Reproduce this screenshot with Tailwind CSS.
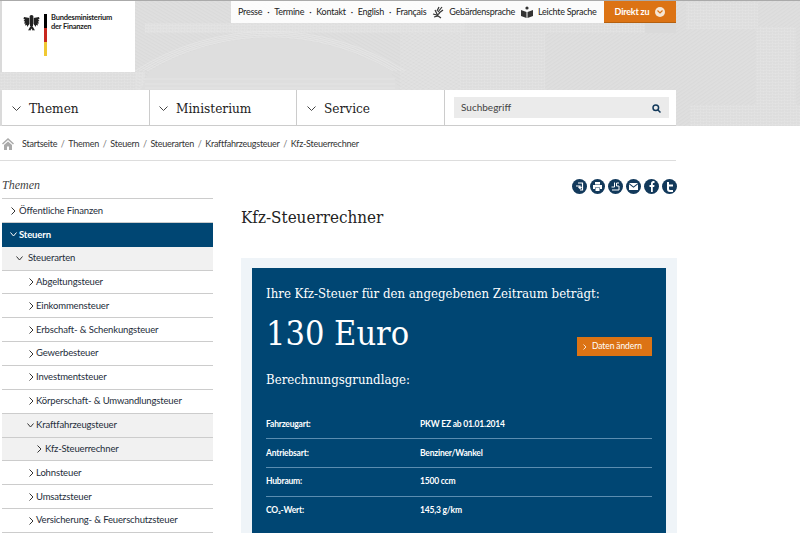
<!DOCTYPE html>
<html lang="de">
<head>
  <meta charset="UTF-8">
  <title>Kfz-Steuerrechner</title>
  <script src="https://cdn.jsdelivr.net/npm/@tailwindcss/browser@4"></script>
</head>
<body class="bg-white font-['Lato',sans-serif] text-[#333]">
  <div class="w-[800px] h-[533px] overflow-hidden">

    <!-- Header -->
    <header class="relative h-[126px] bg-[#dadada] border-t border-[#aaa]">
      <svg class="absolute inset-0" width="800" height="125" fill="none">
        <defs>
          <pattern id="brick" width="6" height="3" patternUnits="userSpaceOnUse">
            <path d="M0 .5H6M0 2H6M1.500 0V1.500M4.500 1.500V3" stroke="#e6e6e6" stroke-width=".6"/>
          </pattern>
          <pattern id="fine" width="3" height="3" patternUnits="userSpaceOnUse" patternTransform="rotate(30)">
            <path d="M0 1H3" stroke="#e6e6e6" stroke-width=".7"/>
          </pattern>
          <pattern id="fine2" width="3" height="3" patternUnits="userSpaceOnUse" patternTransform="rotate(-35)">
            <path d="M0 1H3" stroke="#e6e6e6" stroke-width=".7"/>
          </pattern>
        </defs>
        <rect x="135" y="0" width="330" height="90" fill="url(#fine)"/>
        <rect x="0" y="71" width="145" height="19" fill="url(#brick)"/>
        <rect x="145" y="22" width="500" height="10" fill="url(#brick)"/>
        <path d="M400 32H676V90H400Z" fill="url(#fine2)"/>
        <rect x="460" y="32" width="85" height="57" fill="#dadada"/>
        <rect x="460" y="32" width="85" height="57" fill="url(#brick)"/>
        <path d="M150 70A235 235 0 0 1 390 70L400 90H140Z" fill="#dedede"/>
        <g stroke="#e8e8e8" stroke-width=".7">
          <path d="M147 70A238 238 0 0 1 393 70M143 70A242 242 0 0 1 397 70M139 70A246 246 0 0 1 401 70M135 70A250 250 0 0 1 405 70"/>
          <path d="M145 78H395M145 83H395M145 87H395"/>
        </g>
        <rect x="676" y="0" width="124" height="125" fill="url(#fine2)"/>
        <rect x="686" y="1" width="72" height="27" fill="#dadada"/>
        <rect x="686" y="1" width="72" height="27" fill="url(#brick)"/>
        <rect x="756" y="26" width="40" height="78" fill="#dadada"/>
        <rect x="756" y="26" width="40" height="78" fill="url(#brick)"/>
        <rect x="690" y="104" width="110" height="21" fill="#dadada"/>
        <rect x="690" y="104" width="110" height="21" fill="url(#brick)"/>
      </svg>

      <div class="relative flex items-start h-[89px]">
        <!-- Logo -->
        <div class="ml-[2px] w-[133px] h-[71px] bg-white flex items-start pt-[12px] pl-[21px] gap-[4px]">
          <svg width="17" height="18" viewBox="0 0 17 18" class="mt-px shrink-0" fill="#222">
            <circle cx="8.500" cy="3" r="2"/>
            <path d="M7 4h3v8l-1.500 2L7 12Z"/>
            <path d="M6.500 4 1 3 .5 5 2 5.500 .5 7 2 7.500 1 9.500 2.500 9.500 2 11.500 4 11 4 13 6.500 10ZM10.500 4 16 3 16.500 5 15 5.500 16.500 7 15 7.500 16 9.500 14.500 9.500 15 11.500 13 11 13 13 10.500 10Z"/>
            <path d="M7 13 5 16.500 6.500 16 7 17 8.500 14.500 10 17 10.500 16 12 16.500 10 13Z"/>
          </svg>
          <div class="w-[3px] h-[42px] mt-[1px] flex flex-col shrink-0">
            <div class="h-[14px] bg-black"></div>
            <div class="h-[14px] bg-[#c8281e]"></div>
            <div class="h-[14px] bg-[#f0c832]"></div>
          </div>
          <div class="text-[7.500px] tracking-[-0.2px] leading-[8.500px] font-bold text-[#222] pt-[1px] whitespace-nowrap">Bundesministerium<br>der Finanzen</div>
        </div>

        <!-- Meta nav -->
        <div class="ml-[96px] w-[373px] h-[22px] bg-white/90 flex items-center pl-[7px] text-[9px] tracking-[-0.25px] text-[#222] whitespace-nowrap">
          <span>Presse</span><span class="mx-[5px]">·</span>
          <span>Termine</span><span class="mx-[5px]">·</span>
          <span>Kontakt</span><span class="mx-[5px]">·</span>
          <span>English</span><span class="mx-[5px]">·</span>
          <span>Français</span>
          <svg class="ml-[6px] mr-[5px] shrink-0" width="12" height="13" viewBox="0 0 12 13" fill="none" stroke="#333" stroke-width="1.200">
            <path d="M7 1 5 5M10 1 6 6M11 4 7 7M3 4l2 4M1 8l4 1 3-2M2 11l4-1 3 2"/>
          </svg>
          <span>Gebärdensprache</span>
          <svg class="ml-[6px] mr-[5px] shrink-0" width="12" height="12" viewBox="0 0 12 12" fill="#333">
            <circle cx="6" cy="2" r="1.600"/>
            <path d="M0 4 5.500 6V12L0 10ZM12 4 6.500 6V12L12 10Z"/>
          </svg>
          <span>Leichte Sprache</span>
        </div>
        <div class="w-[72px] h-[22px] bg-[#dc7314] border-b border-[#b5600f] text-white text-[9px] tracking-[-0.2px] font-bold flex items-center justify-center gap-[6px]">
          <span>Direkt zu</span>
          <span class="w-[10px] h-[10px] rounded-full bg-[#f6e6d4] flex items-center justify-center">
            <svg width="6" height="4" viewBox="0 0 6 4" fill="none" stroke="#dc7314" stroke-width="1.200"><path d="M.5.5 3 3 5.500.5"/></svg>
          </span>
        </div>
      </div>

      <!-- Main nav -->
      <nav class="relative ml-[2px] w-[674px] h-[36px] bg-white border-b border-[#ccc] flex font-['DejaVu_Serif',serif] font-stretch-condensed text-[13.500px] text-[#222]">
        <a class="w-[148px] flex items-center border-r border-[#ccc] pl-[10px] pt-[1px] gap-[8px]">
          <svg width="9" height="5" viewBox="0 0 9 5" fill="none" stroke="#444"><path d="M.5.5 4.500 4.500 8.500.5"/></svg>Themen</a>
        <a class="w-[147px] flex items-center border-r border-[#ccc] pl-[9px] pt-[1px] gap-[8px]">
          <svg width="9" height="5" viewBox="0 0 9 5" fill="none" stroke="#444"><path d="M.5.5 4.500 4.500 8.500.5"/></svg>Ministerium</a>
        <a class="w-[148px] flex items-center border-r border-[#ccc] pl-[10px] pt-[1px] gap-[8px]">
          <svg width="9" height="5" viewBox="0 0 9 5" fill="none" stroke="#444"><path d="M.5.5 4.500 4.500 8.500.5"/></svg>Service</a>
        <div class="flex-1 pl-[9px] pt-[7px]">
          <div class="w-[215px] h-[21px] bg-[#ebebeb] flex items-center justify-between pl-[7px] pr-[8px] pb-[1px] font-['Lato',sans-serif] text-[10px] text-[#444]">
            <span>Suchbegriff</span>
            <svg class="mt-[3px]" width="9" height="9" viewBox="0 0 9 9" fill="none" stroke="#12395b" stroke-width="1.500"><circle cx="3.800" cy="3.800" r="2.800"/><path d="M6 6 8.500 8.500"/></svg>
          </div>
        </div>
      </nav>
    </header>

    <!-- Breadcrumb -->
    <div class="w-[676px] h-[35px] border-b border-[#ddd] flex items-center pl-[2px] pt-[1px] text-[9px] tracking-[-0.25px] text-[#333] whitespace-nowrap">
      <svg class="mr-[8px]" width="12" height="12" viewBox="0 0 12 12" fill="#aaa"><path d="M6 0 0 5.500 1 6.500 6 2 11 6.500 12 5.500ZM2 7 6 3.500 10 7V12H7V8.500H5V12H2Z"/></svg>
      <span>Startseite</span><span class="mx-[3.700px] text-[#777]">/</span>
      <span>Themen</span><span class="mx-[3.700px] text-[#777]">/</span>
      <span>Steuern</span><span class="mx-[3.700px] text-[#777]">/</span>
      <span>Steuerarten</span><span class="mx-[3.700px] text-[#777]">/</span>
      <span>Kraftfahrzeugsteuer</span><span class="mx-[3.700px] text-[#777]">/</span>
      <span>Kfz-Steuerrechner</span>
    </div>

    <div class="flex">
      <!-- Sidebar -->
      <aside class="ml-[2px] w-[211px] shrink-0 text-[9.500px] tracking-[-0.15px] text-[#1e2d3a]">
        <div class="h-[38px] border-b border-[#ccc] flex items-center pt-[11px] font-['Liberation_Serif',serif] italic text-[12px] tracking-normal text-[#444]">Themen</div>
        <a class="h-[23.860px] border-b border-[#ccc] flex items-center pl-[9px] pt-[1px] gap-[3px]">
          <svg width="5" height="8" viewBox="0 0 5 8" fill="none" stroke="#333"><path d="M.5.5 4 4 .5 7.500"/></svg>Öffentliche Finanzen</a>
        <a class="h-[23.860px] bg-[#004673] text-white font-bold flex items-center pl-[8px] gap-[2px]">
          <svg width="7" height="5" viewBox="0 0 7 5" fill="none" stroke="#fff"><path d="M.5.5 3.500 4 6.500.5"/></svg>Steuern</a>
        <a class="h-[23.860px] bg-[#f1f1f1] border-b border-[#ccc] flex items-center pl-[14px] gap-[5px]">
          <svg width="7" height="5" viewBox="0 0 7 5" fill="none" stroke="#333"><path d="M.5.5 3.500 4 6.500.5"/></svg>Steuerarten</a>
        <a class="h-[23.860px] border-b border-[#ccc] flex items-center pl-[27px] gap-[2px]">
          <svg width="5" height="8" viewBox="0 0 5 8" fill="none" stroke="#333"><path d="M.5.5 4 4 .5 7.500"/></svg>Abgeltungsteuer</a>
        <a class="h-[23.860px] border-b border-[#ccc] flex items-center pl-[27px] gap-[2px]">
          <svg width="5" height="8" viewBox="0 0 5 8" fill="none" stroke="#333"><path d="M.5.5 4 4 .5 7.500"/></svg>Einkommensteuer</a>
        <a class="h-[23.860px] border-b border-[#ccc] flex items-center pl-[27px] gap-[2px]">
          <svg width="5" height="8" viewBox="0 0 5 8" fill="none" stroke="#333"><path d="M.5.5 4 4 .5 7.500"/></svg>Erbschaft- &amp; Schenkungsteuer</a>
        <a class="h-[23.860px] border-b border-[#ccc] flex items-center pl-[27px] gap-[2px]">
          <svg width="5" height="8" viewBox="0 0 5 8" fill="none" stroke="#333"><path d="M.5.5 4 4 .5 7.500"/></svg>Gewerbesteuer</a>
        <a class="h-[23.860px] border-b border-[#ccc] flex items-center pl-[27px] gap-[2px]">
          <svg width="5" height="8" viewBox="0 0 5 8" fill="none" stroke="#333"><path d="M.5.5 4 4 .5 7.500"/></svg>Investmentsteuer</a>
        <a class="h-[23.860px] border-b border-[#ccc] flex items-center pl-[27px] gap-[2px]">
          <svg width="5" height="8" viewBox="0 0 5 8" fill="none" stroke="#333"><path d="M.5.5 4 4 .5 7.500"/></svg>Körperschaft- &amp; Umwandlungsteuer</a>
        <a class="h-[23.860px] bg-[#f1f1f1] border-b border-[#ccc] flex items-center pl-[25px] gap-[2px]">
          <svg width="7" height="5" viewBox="0 0 7 5" fill="none" stroke="#333"><path d="M.5.5 3.500 4 6.500.5"/></svg>Kraftfahrzeugsteuer</a>
        <a class="h-[23.860px] bg-[#f1f1f1] border-b border-[#ccc] flex items-center pl-[35px] gap-[3px]">
          <svg width="5" height="8" viewBox="0 0 5 8" fill="none" stroke="#333"><path d="M.5.5 4 4 .5 7.500"/></svg>Kfz-Steuerrechner</a>
        <a class="h-[23.860px] border-b border-[#ccc] flex items-center pl-[27px] gap-[2px]">
          <svg width="5" height="8" viewBox="0 0 5 8" fill="none" stroke="#333"><path d="M.5.5 4 4 .5 7.500"/></svg>Lohnsteuer</a>
        <a class="h-[23.860px] border-b border-[#ccc] flex items-center pl-[27px] gap-[2px]">
          <svg width="5" height="8" viewBox="0 0 5 8" fill="none" stroke="#333"><path d="M.5.5 4 4 .5 7.500"/></svg>Umsatzsteuer</a>
        <a class="h-[23.860px] border-b border-[#ccc] flex items-center pl-[27px] gap-[2px]">
          <svg width="5" height="8" viewBox="0 0 5 8" fill="none" stroke="#333"><path d="M.5.5 4 4 .5 7.500"/></svg>Versicherung- &amp; Feuerschutzsteuer</a>
      </aside>

      <!-- Content -->
      <main class="ml-[28px] w-[436px] shrink-0">
        <div class="flex justify-end gap-[3px] pt-[18px] h-[36px]">
          <span class="w-[15px] h-[15px] rounded-full bg-[#12395b] flex items-center justify-center">
            <svg width="9" height="9" viewBox="0 0 9 9" fill="none" stroke="#fff" stroke-width="1.200"><path d="M3 1H7.500V8H5M1 4H5V6.500M3.500 5 5 6.500 6.500 5"/></svg>
          </span>
          <span class="w-[15px] h-[15px] rounded-full bg-[#12395b] flex items-center justify-center">
            <svg width="9" height="9" viewBox="0 0 9 9" fill="#fff"><path d="M2 0H7V2.500H2ZM0 3H9V7H7V5.500H2V7H0ZM2.500 6H6.500V9H2.500Z"/></svg>
          </span>
          <span class="w-[15px] h-[15px] rounded-full bg-[#12395b] flex items-center justify-center">
            <svg width="9" height="9" viewBox="0 0 9 9" fill="none" stroke="#fff"><path d="M3.500.5V5H.5M5.500 1H8M5.500 1V4H8V8H1"/></svg>
          </span>
          <span class="w-[15px] h-[15px] rounded-full bg-[#12395b] flex items-center justify-center">
            <svg width="9" height="7" viewBox="0 0 9 7" fill="#fff"><path d="M0 0H9L4.500 3.500ZM0 1.200 4.500 4.700 9 1.200V7H0Z"/></svg>
          </span>
          <span class="w-[15px] h-[15px] rounded-full bg-[#12395b] flex items-center justify-center">
            <svg width="6" height="11" viewBox="0 0 6 11" fill="#fff"><path d="M2 11V6H.5V4H2V2.500C2 1 3 0 4.300 0H5.500V2H4.500C4 2 3.800 2.200 3.800 2.700V4H5.500L5.200 6H3.800V11Z"/></svg>
          </span>
          <span class="w-[15px] h-[15px] rounded-full bg-[#12395b] flex items-center justify-center">
            <svg width="8" height="10" viewBox="0 0 8 10" fill="#fff"><path d="M1 0H3V2.500H7V4.500H3V6.500C3 7.500 3.500 8 4.500 8H7V10H4C2 10 1 8.800 1 7Z"/></svg>
          </span>
        </div>
        <h1 class="h-[26px] mt-[7px] font-['DejaVu_Serif',serif] font-stretch-condensed text-[16.900px] leading-[26px] text-[#222]">Kfz-Steuerrechner</h1>
        <div class="mt-[28px] h-[400px] bg-[#eff4f8] pt-[10px] px-[11px]">
          <div class="h-[390px] bg-[#004673] px-[14px] text-white w-[414px]">
            <div class="pt-[17px] font-['DejaVu_Serif',serif] font-stretch-condensed text-[13.100px] leading-[18px] whitespace-nowrap">Ihre Kfz-Steuer für den angegebenen Zeitraum beträgt:</div>
            <div class="flex items-end justify-between mt-[8px] h-[44px]">
              <div class="font-['DejaVu_Serif',serif] font-stretch-condensed text-[34px] leading-[44px]">130 Euro</div>
              <a class="w-[75px] h-[19px] -mb-[1px] bg-[#dc7314] text-[8.500px] tracking-[-0.1px] flex items-center pl-[6px] gap-[5px]">
                <svg width="4" height="6" viewBox="0 0 4 6" fill="none" stroke="#fff" stroke-width=".8"><path d="M.5.5 3 3 .5 5.500"/></svg>Daten ändern</a>
            </div>
            <div class="mt-[16px] font-['DejaVu_Serif',serif] font-stretch-condensed text-[13.100px] leading-[18px]">Berechnungsgrundlage:</div>
            <table class="mt-[21px] w-full text-[8.500px] tracking-[-0.2px] font-bold">
              <tbody>
                <tr class="h-[28.700px] border-b border-[#5b8db0]"><td class="w-[154px]">Fahrzeugart:</td><td>PKW EZ ab 01.01.2014</td></tr>
                <tr class="h-[28.700px] border-b border-[#5b8db0]"><td>Antriebsart:</td><td>Benziner/Wankel</td></tr>
                <tr class="h-[28.700px] border-b border-[#5b8db0]"><td>Hubraum:</td><td>1500 ccm</td></tr>
                <tr class="h-[28.700px]"><td>CO₂-Wert:</td><td>145,3 g/km</td></tr>
              </tbody>
            </table>
          </div>
        </div>
      </main>
    </div>
  </div>
</body>
</html>
